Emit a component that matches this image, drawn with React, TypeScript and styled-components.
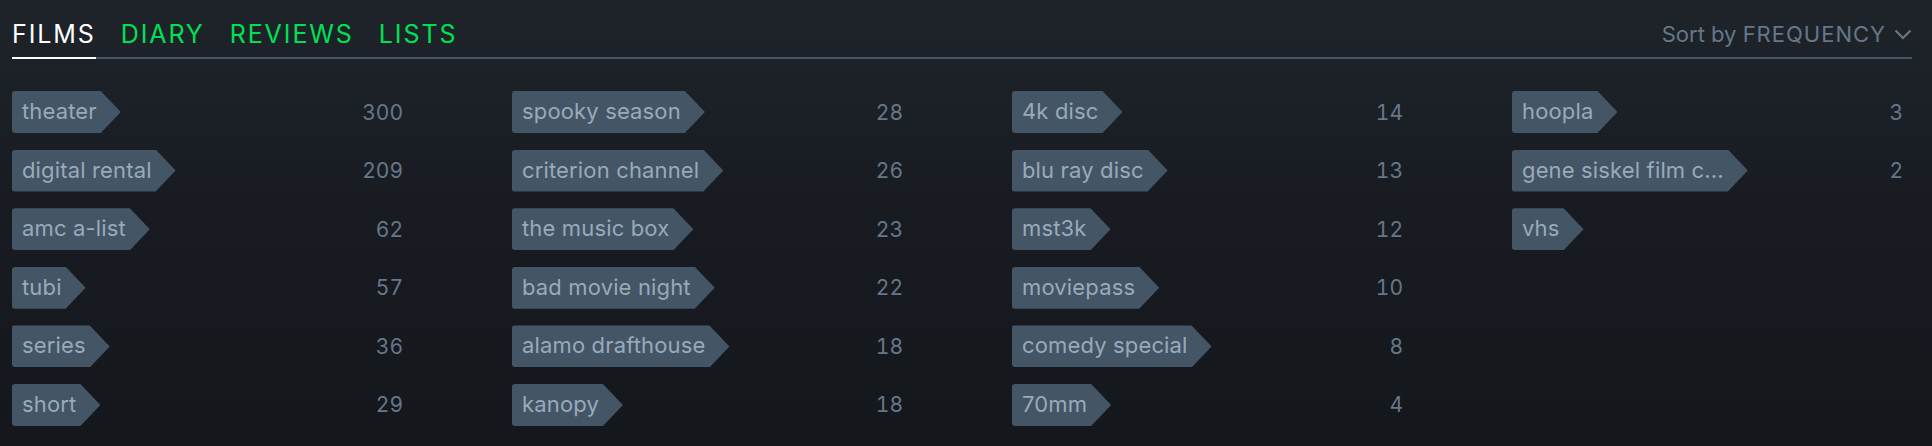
import React from 'react';
import styled, { createGlobalStyle } from 'styled-components';

const GlobalStyle = createGlobalStyle`
  html, body {
    margin: 0;
    padding: 0;
  }
  body {
    min-height: 446px;
    background: linear-gradient(180deg, #1f242b 0%, #181c22 45%, #14171c 100%);
    font-family: Inter, "Liberation Sans", sans-serif;
    -webkit-font-smoothing: antialiased;
  }
`;

type Tag = { name: string; count?: number };

const columns: Tag[][] = [
  [
    { name: 'theater', count: 300 },
    { name: 'digital rental', count: 209 },
    { name: 'amc a-list', count: 62 },
    { name: 'tubi', count: 57 },
    { name: 'series', count: 36 },
    { name: 'short', count: 29 },
  ],
  [
    { name: 'spooky season', count: 28 },
    { name: 'criterion channel', count: 26 },
    { name: 'the music box', count: 23 },
    { name: 'bad movie night', count: 22 },
    { name: 'alamo drafthouse', count: 18 },
    { name: 'kanopy', count: 18 },
  ],
  [
    { name: '4k disc', count: 14 },
    { name: 'blu ray disc', count: 13 },
    { name: 'mst3k', count: 12 },
    { name: 'moviepass', count: 10 },
    { name: 'comedy special', count: 8 },
    { name: '70mm', count: 4 },
  ],
  [
    { name: 'hoopla', count: 3 },
    { name: 'gene siskel film center', count: 2 },
    { name: 'vhs' },
  ],
];

const tabs = ['Films', 'Diary', 'Reviews', 'Lists'];

// long tag names get cut like the site does it
const truncate = (s: string, max = 18) => (s.length > max ? s.slice(0, max) + '...' : s);

const Page = styled.div`
  padding: 0 20px 0 12px;
`;

const Header = styled.nav`
  display: flex;
  justify-content: space-between;
  align-items: flex-end;
  border-bottom: 2px solid #445566;
`;

const TabList = styled.ul`
  display: flex;
  gap: 25px;
  margin: 0;
  padding: 0;
  list-style: none;
`;

const TabItem = styled.li<{ $active?: boolean }>`
  font-size: 25px;
  line-height: 30px;
  letter-spacing: 1.9px;
  text-transform: uppercase;
  padding: 19px 0 8px;
  margin-bottom: -2px;
  color: ${(p) => (p.$active ? '#ffffff' : '#00e054')};
  border-bottom: 2px solid ${(p) => (p.$active ? '#ffffff' : 'transparent')};
`;

const Sort = styled.div`
  display: flex;
  align-items: center;
  gap: 8px;
  padding-bottom: 9px;
  font-size: 22px;
  line-height: 28px;
  color: #667788;
`;

const Caps = styled.span`
  letter-spacing: 1px;
  text-transform: uppercase;
`;

const Grid = styled.div`
  display: grid;
  grid-template-columns: repeat(4, 391px);
  grid-template-rows: repeat(6, 42px);
  grid-auto-flow: column;
  column-gap: 109px;
  row-gap: 16.6px;
  margin-top: 32px;
`;

const Row = styled.div`
  display: flex;
  justify-content: space-between;
  align-items: center;
`;

const TagPill = styled.span`
  display: inline-block;
  height: 42px;
  line-height: 41px;
  padding: 0 24px 0 10px;
  font-size: 22px;
  letter-spacing: 0.15px;
  color: #99aabb;
  background: #445566;
  border-radius: 3px 0 0 3px;
  white-space: nowrap;
  clip-path: polygon(0 0, calc(100% - 20px) 0, 100% 50%, calc(100% - 20px) 100%, 0 100%);
`;

const Count = styled.span`
  font-size: 21px;
  color: #667788;
  font-variant-numeric: tabular-nums;
`;

const Chevron = () => (
  <svg width="18" height="11" viewBox="0 0 18 11" fill="none">
    <path d="M1.5 1.5 L9 9 L16.5 1.5" stroke="#667788" strokeWidth="2.2" />
  </svg>
);

export default function App() {
  return (
    <>
      <GlobalStyle />
      <Page>
        <Header>
          <TabList>
            {tabs.map((t, i) => (
              <TabItem key={t} $active={i === 0}>
                {t}
              </TabItem>
            ))}
          </TabList>
          <Sort>
            <span>
              Sort by <Caps>Frequency</Caps>
            </span>
            <Chevron />
          </Sort>
        </Header>
        <Grid>
          {columns.flat().map((tag) => (
            <Row key={tag.name}>
              <TagPill>{truncate(tag.name)}</TagPill>
              {tag.count !== undefined && <Count>{tag.count}</Count>}
            </Row>
          ))}
        </Grid>
      </Page>
    </>
  );
}
